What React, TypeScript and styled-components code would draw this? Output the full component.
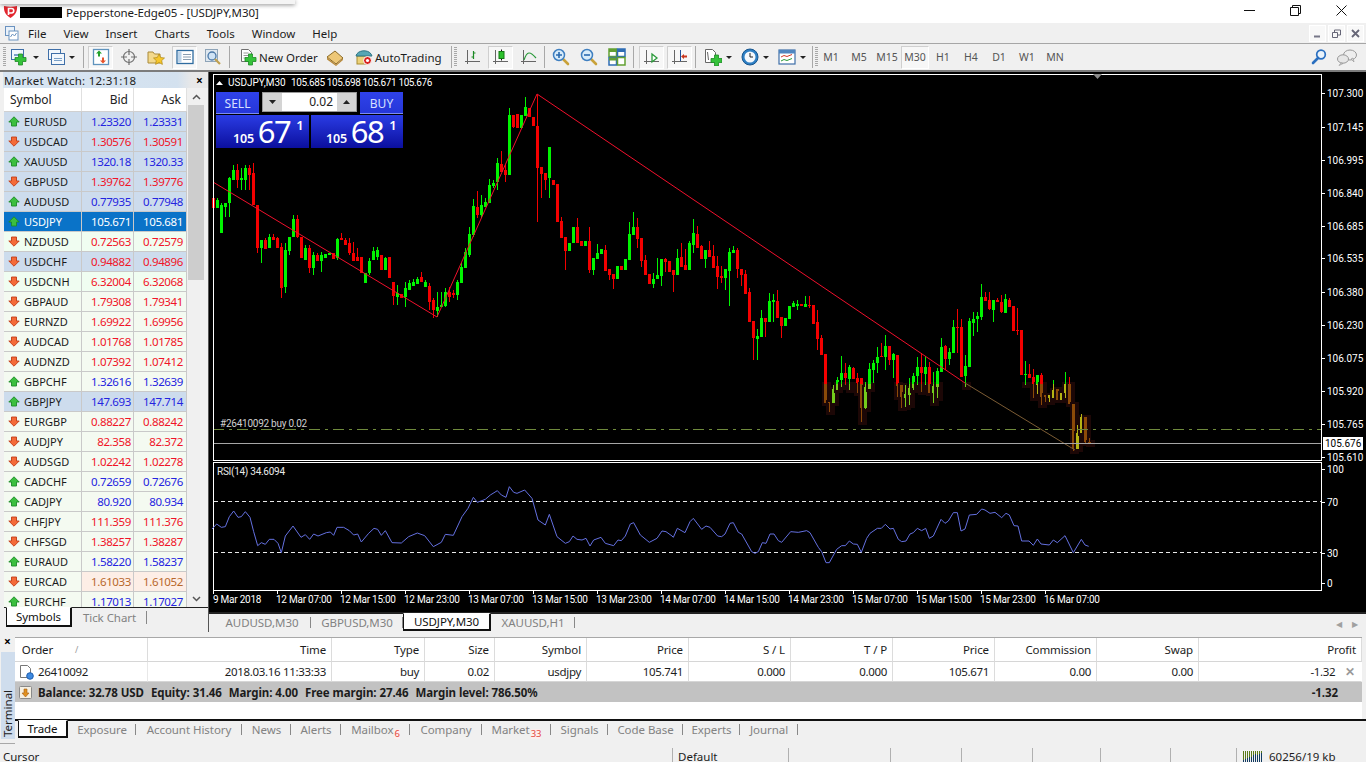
import React from 'react'
import styled, { createGlobalStyle } from 'styled-components'

const Global = createGlobalStyle`
  html, body { margin: 0; padding: 0; background: #f0f0f0; }
  body { font-family: 'Noto Sans', 'Liberation Sans', sans-serif; font-size: 11.5px; color: #1c1c1c; }
  * { box-sizing: border-box; }
`

const CHART_FONT = "'Roboto', 'Liberation Sans', sans-serif"

const Page = styled.div`
  position: relative;
  width: 1366px;
  height: 762px;
  overflow: hidden;
  display: flex;
  flex-direction: column;
`

const StrayPopup = styled.div`
  position: absolute;
  left: 0;
  top: 0;
  width: 295px;
  height: 4px;
  background: #f4f4f4;
  box-shadow: 0 1px 4px rgba(0, 0, 0, 0.45);
`

/* title bar */
const TitleBar = styled.div`
  height: 23px;
  flex: none;
  background: #fff;
  display: flex;
  align-items: center;
  padding-left: 3px;
`
const BlackedOut = styled.div`
  width: 42px;
  height: 11px;
  background: #000;
  margin: 1px 4px 0 2px;
`
const TitleText = styled.div`
  margin-top: 1px;
  letter-spacing: -0.1px;
`
const CaptionButtons = styled.div`
  margin-left: auto;
  margin-right: 2px;
  display: flex;
  margin-top: -3px;
`
const CaptionButton = styled.div`
  width: 46px;
  display: flex;
  justify-content: center;
`

/* menu */
const MenuBar = styled.div`
  height: 21px;
  flex: none;
  background: #f0f0f0;
  border-bottom: 1px solid #a6a6a6;
  display: flex;
  align-items: center;
  padding: 0 2px 0 5px;
  gap: 17px;
`
const MenuIcon = styled.div`
  margin-right: -8px;
`
const MdiButtons = styled.div`
  margin-left: auto;
  display: flex;
  gap: 2px;
`
const MdiButton = styled.div`
  width: 17px;
  height: 17px;
  background: #f8f8f8;
  border: 1px solid #fff;
  display: flex;
  align-items: center;
  justify-content: center;
`

/* toolbar */
const ToolBar = styled.div`
  height: 28px;
  flex: none;
  background: #f0f0f0;
  border-bottom: 2px solid #7c7c7c;
  display: flex;
  align-items: center;
  padding: 0 5px 0 3px;
`
const Grip = styled.div<{ $ml?: number }>`
  width: 3px;
  height: 20px;
  margin-left: ${p => p.$ml ?? 0}px;
  background: repeating-linear-gradient(#a8a8a8 0 1px, transparent 1px 2px);
`
const ToolSep = styled.div<{ $ml: number }>`
  width: 1px;
  height: 22px;
  background: #a8a8a8;
  margin-left: ${p => p.$ml}px;
`
const Tool = styled.div<{ $w?: number; $ml?: number; $active?: boolean; $push?: boolean }>`
  width: ${p => p.$w ?? 25}px;
  height: 23px;
  margin-left: ${p => (p.$push ? 'auto' : `${p.$ml ?? 0}px`)};
  flex: none;
  display: flex;
  align-items: center;
  justify-content: center;
  ${p => p.$active && 'background: #f7f7f7; border: 1px solid #cfcfcf; border-bottom-color: #fff; border-right-color: #fff;'}
`
const TextTool = styled(Tool)`
  justify-content: flex-start;
  padding-left: 5px;
  gap: 2px;
  white-space: nowrap;
`
const DropArrow = styled.div`
  width: 0;
  height: 0;
  border-left: 3px solid transparent;
  border-right: 3px solid transparent;
  border-top: 3px solid #222;
`
const Period = styled(Tool)`
  width: 28px;
  color: #555;
  font-size: 10.5px;
`

/* work area */
const Workspace = styled.div`
  height: 560px;
  flex: none;
  display: flex;
`
const MarketWatch = styled.div`
  width: 209px;
  flex: none;
  display: flex;
  flex-direction: column;
  background: #f0f0f0;
  border-right: 1px solid #555;
  padding-left: 4px;
`
const WatchTitle = styled.div`
  height: 16px;
  flex: none;
  display: flex;
  align-items: center;
  margin-left: -1px;
  letter-spacing: 0.25px;
  background: linear-gradient(90deg, #d8e5f2, #d3e1ef 85%, #e8e8e8 92%);
  padding-left: 1px;
  color: #222;
`
const WatchClose = styled.span`
  margin-left: auto;
  margin-right: 5px;
  font-weight: 700;
  font-size: 12px;
  color: #000;
`
const WatchBody = styled.div`
  height: 519px;
  flex: none;
  display: flex;
  overflow: hidden;
`
const WatchTable = styled.div`
  width: 183px;
  flex: none;
`
const WatchHead = styled.div`
  height: 24px;
  display: grid;
  grid-template-columns: 78px 52px 53px;
  background: #fff;
  border-bottom: 1px solid #d0d0d0;
  font-size: 12px;
  color: #222;
`
const HeadCell = styled.div<{ $left?: boolean }>`
  display: flex;
  align-items: center;
  justify-content: ${p => (p.$left ? 'flex-start' : 'flex-end')};
  padding: 0 5px 0 6px;
  border-right: 1px solid #e0e0e0;
`
const TONES = {
  blue: '#cddced',
  green: '#f0fdf1',
  pale: '#f4faf1',
  sel: '#0a73c8',
}
type Tone = keyof typeof TONES
const WatchRow = styled.div<{ $tone: Tone }>`
  height: 20px;
  display: grid;
  grid-template-columns: 78px 52px 53px;
  background: ${p => TONES[p.$tone]};
  color: ${p => (p.$tone === 'sel' ? '#fff' : '#1c1c1c')};
  font-size: 11.5px;
`
const SymbolCell = styled.div`
  display: flex;
  align-items: center;
  gap: 4px;
  padding-left: 4px;
  font-size: 11px;
  border-right: 1px solid #c9c9c9;
  border-bottom: 1px solid #c9c9c9;
`
const PriceCell = styled.div<{ $color: string; $tint?: string; $pr: number }>`
  display: flex;
  align-items: center;
  justify-content: flex-end;
  padding-right: ${p => p.$pr}px;
  letter-spacing: -0.36px;
  color: ${p => p.$color};
  background: ${p => p.$tint ?? 'transparent'};
  border-right: 1px solid #c9c9c9;
  border-bottom: 1px solid #c9c9c9;
`
const ScrollBar = styled.div`
  width: 16px;
  flex: none;
  margin-left: 1px;
  display: flex;
  flex-direction: column;
  background: #f0f0f0;
`
const ScrollButton = styled.div`
  height: 17px;
  flex: none;
  display: flex;
  align-items: center;
  justify-content: center;
`
const ScrollThumb = styled.div`
  height: 175px;
  flex: none;
  background: #cdcdcd;
`
const ScrollRest = styled.div`
  flex: 1;
`
const SheetTabs = styled.div<{ $top: string }>`
  height: 21px;
  flex: none;
  display: flex;
  align-items: stretch;
  background: #f0f0f0;
  border-top: 1px solid ${p => p.$top};
  color: #828282;
  letter-spacing: -0.05px;
`
const SheetTab = styled.div<{ $w: number; $ml?: number; $active?: boolean; $sep?: boolean }>`
  width: ${p => p.$w}px;
  margin-left: ${p => p.$ml ?? 0}px;
  margin-top: -1px;
  flex: none;
  display: flex;
  align-items: center;
  justify-content: center;
  white-space: nowrap;
  position: relative;
  ${p => p.$active && `
    background: #fff;
    color: #111;
    border: 1px solid #111;
    border-top-color: #fff;
    border-bottom-width: 2px;
    border-right-width: 2px;
    margin-bottom: 1px;
  `}
  ${p => p.$sep && `
    &::after {
      content: '';
      position: absolute;
      right: 0;
      top: 4px;
      bottom: 4px;
      width: 1px;
      background: #888;
    }
  `}
`
const ChartColumn = styled.div`
  flex: 1;
  display: flex;
  flex-direction: column;
  min-width: 0;
`
const ChartBox = styled.div`
  position: relative;
  height: 540px;
  flex: none;
  background: #000;
`
const ChartSvg = styled.svg`
  display: block;
  font-family: ${CHART_FONT};
  font-size: 10px;
`
const ChartTabs = styled(SheetTabs)`
  height: 20px;
  border-top: 2px solid #222;
  padding-left: 4px;
`
const TabScroller = styled.div`
  margin-left: auto;
  width: 44px;
  display: flex;
  align-items: center;
  justify-content: space-between;
  padding: 0 8px 0 14px;
  color: #a0a0a0;
  font-size: 8px;
`

/* one click trading */
const OneClick = styled.div`
  position: absolute;
  left: 7px;
  top: 20px;
  width: 187px;
  display: grid;
  grid-template-columns: 93px 92px;
  column-gap: 2px;
  row-gap: 1px;
`
const TradeRow = styled.div`
  grid-column: 1 / -1;
  display: flex;
  justify-content: space-between;
  height: 22px;
`
const TradeButton = styled.div`
  width: 43px;
  background: linear-gradient(#2f42ea, #2536d8);
  color: #d8e0ff;
  font-size: 12px;
  display: flex;
  align-items: center;
  justify-content: center;
  box-shadow: inset 0 -1px 0 #7e8cf0;
`
const Spinner = styled.div`
  width: 95px;
  height: 20px;
  background: #d4d4d4;
  border: 1px solid #999;
  display: flex;
  align-items: stretch;
`
const SpinStep = styled.div`
  width: 19px;
  flex: none;
  display: flex;
  align-items: center;
  justify-content: center;
`
const SpinValue = styled.div`
  flex: 1;
  background: #fff;
  text-align: right;
  font-size: 12px;
  line-height: 18px;
  padding-right: 4px;
  color: #222;
`
const PriceBox = styled.div<{ $pad: number }>`
  height: 33px;
  background: linear-gradient(#2a3ce4, #0b0f9e);
  color: #fff;
  display: flex;
  align-items: baseline;
  padding-left: ${p => p.$pad}px;
`
const PriceHandle = styled.span`
  font-size: 12.5px;
  font-weight: 600;
  letter-spacing: -0.2px;
`
const PriceBig = styled.span`
  font-size: 31px;
  line-height: 32px;
  margin-left: 4px;
  letter-spacing: -1.6px;
`
const PriceSup = styled.span`
  font-size: 13px;
  font-weight: 600;
  margin-left: 6px;
  align-self: flex-start;
  margin-top: 1px;
`

/* terminal */
const Terminal = styled.div`
  height: 112px;
  flex: none;
  display: flex;
  background: #f0f0f0;
  border-bottom: 1px solid #a8a8a8;
`
const TerminalSide = styled.div`
  width: 15px;
  flex: none;
  display: flex;
  flex-direction: column;
  align-items: center;
`
const TerminalClose = styled.div`
  height: 20px;
  padding-top: 2px;
  font-weight: 700;
  font-size: 12px;
  color: #000;
  line-height: 16px;
`
const TerminalLabel = styled.div`
  flex: 1;
  width: 14px;
  margin-bottom: 4px;
  background: #cfdded;
  writing-mode: vertical-rl;
  transform: rotate(180deg);
  line-height: 14px;
  color: #222;
  padding-top: 2px;
`
const TerminalMain = styled.div`
  flex: 1;
  display: flex;
  flex-direction: column;
  padding-top: 5px;
  min-width: 0;
`
const TradeTable = styled.div`
  width: 1347px;
  height: 82px;
  flex: none;
  background: #fff;
  border-top: 1px solid #a8a8a8;
`
const COLUMNS = '133px 184px 93px 70px 92px 102px 102px 102px 102px 102px 102px 163px'
const GridRow = styled.div<{ $h: number; $num?: boolean }>`
  height: ${p => p.$h}px;
  display: grid;
  grid-template-columns: ${COLUMNS};
  letter-spacing: ${p => (p.$num ? '-0.32px' : '-0.12px')};
`
const GridCell = styled.div<{ $left?: boolean; $line?: string }>`
  display: flex;
  align-items: center;
  justify-content: ${p => (p.$left ? 'flex-start' : 'flex-end')};
  gap: 4px;
  padding: 0 5px 0 4px;
  white-space: nowrap;
  border-right: 1px solid ${p => p.$line ?? '#dcdcdc'};
  border-bottom: 1px solid #d6d6d6;
`
const SortMark = styled.span`
  color: #999;
  font-size: 9px;
  margin-left: 18px;
`
const CloseMark = styled.span`
  color: #999;
  font-weight: 700;
  margin-left: 6px;
  margin-right: 1px;
`
const BalanceRow = styled.div`
  height: 20px;
  background: #c2c2c2;
  display: flex;
  align-items: center;
  padding-left: 4px;
  font-weight: 700;
  letter-spacing: -0.08px;
`
const BalanceItem = styled.span`
  margin-left: 7px;
  &:first-of-type { margin-left: 6px; }
`
const BalanceTotal = styled.span`
  margin-left: auto;
  margin-right: 24px;
`
const TerminalTabs = styled(SheetTabs)`
  height: 25px;
  border-top: 2px solid #111;
  padding: 0 0 5px 3px;
`
const Counter = styled.span`
  color: #e2483c;
  background: #fdeeee;
  font-size: 9.5px;
  line-height: 10px;
  margin: 8px 0 0 1px;
`

/* status bar */
const StatusBar = styled.div`
  flex: 1;
  display: flex;
  background: #f0f0f0;
  line-height: 17px;
  overflow: hidden;
  padding-top: 4px;
  padding-left: 3px;
`
const StatusCell = styled.div<{ $w: number; $flush?: boolean; $plain?: boolean }>`
  width: ${p => p.$w}px;
  flex: none;
  padding-left: ${p => (p.$flush ? 0 : 5)}px;
  border-right: ${p => (p.$plain ? 'none' : '1px solid #b0b0b0')};
  display: flex;
  gap: 5px;
  white-space: nowrap;
`

/* icons */
const IconSvg = styled.svg`
  flex: none;
  display: block;
`
const Svg: React.FC<{ s?: number; w?: number; h?: number; children: React.ReactNode }> = ({ s = 18, w, h, children }) => (
  <IconSvg width={w ?? s} height={h ?? s} viewBox={`0 0 ${w ?? s} ${h ?? s}`}>{children}</IconSvg>
)
const GreenPlus: React.FC<{ x: number; y: number }> = ({ x, y }) => (
  <path d={`M${x + 3.5} ${y}h4v3.5h3.5v4h-3.5v3.5h-4v-3.5h-3.5v-4h3.5z`} fill="#35c23a" stroke="#1c8a24" strokeWidth=".8" />
)
const Axes = () => <path d="M3.5 2v14M1 13.5h15" stroke="#666" fill="none" />
const Lens: React.FC<{ sign: 'plus' | 'minus' }> = ({ sign }) => (
  <Svg>
    <path d="M11 11l5 5" stroke="#c9a23a" strokeWidth="2.6" strokeLinecap="round" />
    <circle cx="7" cy="7" r="5.5" fill="#d8ecfa" stroke="#3f7fc0" strokeWidth="1.5" />
    <path d={sign === 'plus' ? 'M4 7h6M7 4v6' : 'M4 7h6'} stroke="#2a6ab0" strokeWidth="1.6" />
  </Svg>
)
const LogoIcon = () => (
  <Svg w={15} h={13}>
    <path d="M1 1c4 1 9 1 13 0 .5 5-1.5 9-6.5 12C2.500 10 .5 6 1 1z" fill="#e2262e" />
    <path d="M5.500 10V3.500h3a2 2 0 010 4.500h-3" fill="none" stroke="#fff" strokeWidth="1.600" />
  </Svg>
)
const FileMenuIcon = () => (
  <Svg w={14} h={15}>
    <rect x=".5" y=".5" width="9" height="9" fill="#eaf2fa" stroke="#6b93c0" />
    <rect x="4" y="5" width="9" height="9" fill="#fff" stroke="#6b93c0" />
    <path d="M5.500 11l2-3 2 2 2-3" stroke="#6b93c0" fill="none" />
  </Svg>
)
const Window: React.FC<{ x: number; y: number; w: number; h: number }> = ({ x, y, w, h }) => (
  <g>
    <rect x={x + .5} y={y + .5} width={w} height={h} fill="#f2f7fc" stroke="#3f6fa8" />
    <path d={`M${x + 3} ${y + 5.5}h${w - 5}M${x + 3} ${y + h - 3.5}h${w - 5}`} stroke="#7aa0c8" />
  </g>
)
const ICONS: Record<string, React.ReactNode> = {
  newChart: <Svg><Window x={1} y={1} w={12} h={10} /><GreenPlus x={5} y={6} /></Svg>,
  profiles: <Svg><Window x={1} y={1} w={12} h={10} /><Window x={4} y={5} w={13} h={11} /></Svg>,
  watch: (
    <Svg>
      <rect x="1.500" y="1.500" width="15" height="15" fill="#fff" stroke="#5f93bd" strokeWidth="1.300" />
      <path d="M7 2.500l3 3H8v3H6v-3H4z" fill="#22a02a" />
      <path d="M11 15.500l3-3h-2v-3h-2v3H8z" fill="#e8532a" />
    </Svg>
  ),
  cross: (
    <Svg>
      <circle cx="9" cy="9" r="5.500" fill="none" stroke="#707070" strokeWidth="1.200" />
      <path d="M9 1v6M9 11v6M1 9h6M11 9h6" stroke="#707070" strokeWidth="1.200" />
    </Svg>
  ),
  favorites: (
    <Svg>
      <path d="M1 4h5l1.500 2H13v9H1z" fill="#f3d98c" stroke="#a98a3a" />
      <path d="M12 6l1.700 3.500 3.800.5-2.800 2.600.7 3.800-3.400-1.900-3.400 1.900.7-3.800L6.500 10l3.800-.5z" fill="#f6c62a" stroke="#ad8716" strokeWidth=".7" />
    </Svg>
  ),
  navigator: (
    <Svg>
      <rect x="1" y="2.500" width="16" height="13" fill="#fff" stroke="#2f6ca0" strokeWidth="1.300" />
      <rect x="2" y="3.500" width="3.500" height="11" fill="#bcd4ea" />
      <path d="M7 6.500h8M7 9h8M7 11.500h8" stroke="#8a9db0" />
    </Svg>
  ),
  tester: (
    <Svg>
      <rect x="1.500" y="1.500" width="12" height="12" fill="#dfe8f0" stroke="#8ea4b8" />
      <circle cx="8" cy="8" r="4" fill="#cfe3f5" stroke="#4a78a8" strokeWidth="1.300" />
      <path d="M11 11l5 5" stroke="#c0a050" strokeWidth="2.200" />
    </Svg>
  ),
  newOrder: (
    <Svg>
      <path d="M2.500 1.500h7l3 3v9h-10z" fill="#fff" stroke="#707070" />
      <path d="M4.500 5h5M4.500 7.500h5M4.500 10h3" stroke="#999" />
      <GreenPlus x={6} y={6} />
    </Svg>
  ),
  book: (
    <Svg>
      <path d="M1 9l8-6 8 7-7 6z" fill="#edc777" stroke="#8a6a28" />
      <path d="M1 9.500v2l9 6.500 7-6v-1.500l-7 6z" fill="#b98a3a" />
    </Svg>
  ),
  auto: (
    <Svg>
      <rect x="2" y="8" width="11" height="8" fill="#ecd27a" stroke="#a88c30" />
      <path d="M1 8c1-6 12-7 15-2l1 2z" fill="#57a6b4" stroke="#2f7484" />
      <circle cx="12.500" cy="12.500" r="4" fill="#d8231f" stroke="#fff" />
      <circle cx="12.500" cy="12.500" r="1.600" fill="#fff" />
    </Svg>
  ),
  bars: <Svg><Axes /><path d="M9.500 3v8M7.500 9h2M9.500 5h2" stroke="#1c8a24" strokeWidth="1.200" fill="none" /></Svg>,
  candles: <Svg><Axes /><path d="M9.500 1.500v11" stroke="#111" /><rect x="7" y="3.500" width="5" height="7" fill="#2bc02b" stroke="#137a13" /></Svg>,
  line: <Svg><Axes /><path d="M4 12c3-9 6-9 12-2" stroke="#2a9a3a" strokeWidth="1.200" fill="none" /></Svg>,
  tile: (
    <Svg>
      <rect x="1" y="1" width="7.500" height="7.500" fill="#fff" stroke="#62a032" strokeWidth="1.500" />
      <rect x="9.500" y="1" width="7.500" height="7.500" fill="#fff" stroke="#2e6cb4" strokeWidth="1.500" />
      <rect x="1" y="9.500" width="7.500" height="7.500" fill="#fff" stroke="#2e6cb4" strokeWidth="1.500" />
      <rect x="9.500" y="9.500" width="7.500" height="7.500" fill="#fff" stroke="#62a032" strokeWidth="1.500" />
      <path d="M1 2.500h7.500M1 11h7.500" stroke="#62a032" strokeWidth="3" />
      <path d="M9.500 2.500H17" stroke="#2e6cb4" strokeWidth="3" />
    </Svg>
  ),
  scroll: <Svg><Axes /><path d="M9 6l5 4-5 4z" fill="#fff" stroke="#2a9a3a" strokeWidth="1.300" /></Svg>,
  shift: <Svg><Axes /><path d="M9.500 2v11" stroke="#1f4f9a" /><path d="M16 7.500h-3V6l-3 2.500 3 2.500V9.500h3z" fill="#c8361e" /></Svg>,
  newDoc: (
    <Svg>
      <path d="M1.500 1.500h7l3 3v10h-10z" fill="#fff" stroke="#666" />
      <path d="M3.500 4l1 8" stroke="#666" />
      <GreenPlus x={7} y={7} />
    </Svg>
  ),
  clock: (
    <Svg>
      <circle cx="9" cy="9" r="8" fill="#2d7fc4" stroke="#17558e" />
      <circle cx="9" cy="9" r="5.500" fill="#f4f8fc" />
      <path d="M9 5v4h3" stroke="#222" fill="none" />
    </Svg>
  ),
  template: (
    <Svg>
      <rect x="1" y="2" width="16" height="14" fill="#fff" stroke="#3f6fa8" strokeWidth="1.200" />
      <rect x="1" y="2" width="16" height="3.500" fill="#4f86c0" />
      <path d="M3 9l3-1.500 3 1 5-2" stroke="#d23a2a" fill="none" />
      <path d="M3 13l3-1.500 3 1 5-2" stroke="#2a9a3a" fill="none" />
    </Svg>
  ),
  search: (
    <Svg>
      <circle cx="11" cy="6.500" r="4.300" fill="#eaf3fb" stroke="#2a6fc0" strokeWidth="1.700" />
      <path d="M8 10l-5 5" stroke="#2a6fc0" strokeWidth="2.600" strokeLinecap="round" />
    </Svg>
  ),
  chat: (
    <Svg w={22} h={18}>
      <ellipse cx="14" cy="7" rx="6.500" ry="5" fill="#eee" stroke="#999" />
      <path d="M15 11l3 3-1-4z" fill="#ddd" stroke="#999" strokeWidth=".7" />
      <ellipse cx="7" cy="11" rx="5.500" ry="4.200" fill="#e6e6e6" stroke="#999" />
      <path d="M5 15l-2 2.500 4-2z" fill="#ddd" stroke="#999" strokeWidth=".7" />
    </Svg>
  ),
}

const UpArrow = () => (
  <Svg w={12} h={11}>
    <path d="M6 .8L11.200 6H8.500v4h-5V6H.8z" fill="#3bbf3f" stroke="#1c8a28" strokeWidth=".9" />
  </Svg>
)
const DownArrow = () => (
  <Svg w={12} h={11}>
    <path d="M6 10.200L.8 5h2.700V1h5v4h2.700z" fill="#f46a38" stroke="#c23c16" strokeWidth=".9" />
  </Svg>
)

/* quote data */
type Quote = [string, string, string, 'u' | 'd', Tone?, string?]
const QUOTES: Quote[] = [
  ['EURUSD', '1.23320', '1.23331', 'u', 'blue'],
  ['USDCAD', '1.30576', '1.30591', 'd', 'blue'],
  ['XAUUSD', '1320.18', '1320.33', 'u', 'blue'],
  ['GBPUSD', '1.39762', '1.39776', 'd', 'blue'],
  ['AUDUSD', '0.77935', '0.77948', 'u', 'blue'],
  ['USDJPY', '105.671', '105.681', 'u', 'sel'],
  ['NZDUSD', '0.72563', '0.72579', 'd', 'green'],
  ['USDCHF', '0.94882', '0.94896', 'd', 'blue'],
  ['USDCNH', '6.32004', '6.32068', 'd', 'green'],
  ['GBPAUD', '1.79308', '1.79341', 'd'],
  ['EURNZD', '1.69922', '1.69956', 'd'],
  ['AUDCAD', '1.01768', '1.01785', 'd'],
  ['AUDNZD', '1.07392', '1.07412', 'd'],
  ['GBPCHF', '1.32616', '1.32639', 'u'],
  ['GBPJPY', '147.693', '147.714', 'u', 'blue'],
  ['EURGBP', '0.88227', '0.88242', 'd'],
  ['AUDJPY', '82.358', '82.372', 'd'],
  ['AUDSGD', '1.02242', '1.02278', 'd'],
  ['CADCHF', '0.72659', '0.72676', 'u'],
  ['CADJPY', '80.920', '80.934', 'u'],
  ['CHFJPY', '111.359', '111.376', 'd'],
  ['CHFSGD', '1.38257', '1.38287', 'd'],
  ['EURAUD', '1.58220', '1.58237', 'u'],
  ['EURCAD', '1.61033', '1.61052', 'd', 'pale', '#fdeee6'],
  ['EURCHF', '1.17013', '1.17027', 'u'],
]

/* candles, read from 3x crops: kind top,bottom,high,low in crop pixels */
const CANDLES_A = `r370,400,365,405 g375,400,368 g390,475,385 g385,395,385,425 g310,385,305,425 g285,315,270 r285,315,268,340
g310,315,280,345 g280,315,270,345 r280,300,270,345 r295,390,265 r390,520,390,535 g495,520,495,565 r495,522,490 g487,520,478 r485,495,478
r490,520,485 r515,640,505,668 g525,635,505,655 g485,527,485,540 g433,487,420 r433,485,420,490 r485,550 g520,555,510 r520,580,510,595
g540,580,530,600 r540,558,535 g540,558,530,590 g538,548 g533,540 r535,553 g492,550,488,555 r490,495,475 r495,510,488 r505,535,490,540
r535,558,500 r545,558,520 r545,595 g595,625 g557,595,550,600 g527,555,515 g525,545,515,555 r540,585 g548,585,545 r547,610 r622,662,622,690
g655,665,630,690 r658,668 g640,665,620,695 g625,645,615 g622,632,612 g612,627,605 r605,622,592 g622,635,615 r632,680,625,705 r675,705,670,730
g695,708,650,725 g690,697,650 g650,692,640,695 r650,665,635,680 r655,660,645,670 g622,660,615,675 g575,625,565 g530,580,520 g478,540,455,545
g393,480,372,485 r395,420,347,430 g390,420,360,428 g380,395,370 g330,385,312 g325,332,315,340 g265,320,250,345 r267,290,228 r285,300,270,322
g120,300,100 r120,155,120,160 r118,160 g120,158 g97,122,65 r100,125 r125,152 r152,278,60,440 r275,297,275,370 r295,315,295,345 g215,310,215,370`
const CANDLES_B = `r0,15 r12,125 r123,173,110 r172,212,172,270 g190,212 g140,190 r140,188,113 r183,198 g183,198 r183,270,140,280 g233,270,233,285
g218,237,193 g207,222 r210,273,195 r268,285,268,300 r282,297,282,327 g258,298 r258,270 g237,270 g162,240,127 g140,165,97 r140,177,113,205
r175,242,175,260 r240,285,225 r283,312 g297,312,280,325 g285,297,235 g238,288,238,318 r238,245,235,275 r243,275 r270,285,270,335 g233,285,207
r232,260,190 r255,270,208 g190,270,183 g158,195,117,218 r162,203,138 r197,237,195 g210,237,210,265 r210,232,183 r228,263,195 r258,290,228,327
r288,293,257,308 g267,293,267,330 g215,272,205,378 g210,218,198 r210,268,203,295 r267,285,267,318 r282,342,270 r335,425,325 r423,473,423,540
g467,477,447,540 g413,472,390 r413,427,413,470 g363,425,340 g360,365,342,425 r363,413,330 r411,437,411,475 g413,438 g378,417 g368,382,362
g372,377,360,390 r372,378 g372,382,348 r375,377,348,385 r375,432 r426,477,390,510 r473,525,465 r522,668 r665,670,665,695 g628,670,615 g600,630,590`
const CANDLES_C = `g308,330,258,350 r308,325,280,345 g292,327,285,360 r295,327,290 r323,340,310,370 r325,413,325,455 g352,413,335,418 g297,357,280
g280,300,270,340 g262,280,232,310 r258,262,220 g227,260,195,300 r228,270,228,285 g253,270,250,325 r255,347,255,382 r345,382,345,415
g373,383,345,410 g353,375,325,405 g318,355,310,360 g290,318,260,345 r290,310,250,365 g290,313,258,345 r290,370,275 g347,370,305,398
g303,350,295,385 g230,307,205 r228,268,225,300 g247,267,235,285 g170,250,150 r170,172,118,250 r170,320,147 g288,318,255,350 g153,292,145
g147,158,125,198 g137,148,125,185 g80,142,42,150 r80,93,65 r90,118,67,120 g90,120,90,155 r90,97,85 r95,125,75,128 g88,128,72 r90,110,85
r107,183 r180,183,115,195 r180,315 g312,316,272,345 r312,323,282 r321,343,296,385 g315,345,315,372 r315,380,310,405 r375,380,375,395
g375,383,375,395 g360,385,330 r358,390 g368,390 g343,370,305,385 r343,402,322 r402,537,402,542 g490,537,465 g442,490,432 r442,515,442,520 r515,522,503`

type Candle = { x: number; top: number; bottom: number; high: number; low: number; up: boolean }
const readCandles = (src: string, start: number, y0: number): Candle[] =>
  src.trim().split(/\s+/).map((tok, i) => {
    const [t, b, h, l] = tok.slice(1).split(',').map(Number)
    const y = (v: number) => y0 + v / 3
    return { x: 213 + (start + i) * 4, top: y(t), bottom: y(b), high: y(h ?? t), low: y(l ?? b), up: tok[0] === 'g' }
  })
const CANDLES = [
  ...readCandles(CANDLES_A, 0, 75),
  ...readCandles(CANDLES_B, 85, 180),
  ...readCandles(CANDLES_C, 157, 270),
]

/* from about y=384 on the right, the bars sit under a translucent panel */
const FADE_Y = 384
const FADE_X = 822
const fadeColor = (c: Candle) => (c.up ? (c.x > 1030 ? '#b4b414' : '#74cc1c') : '#8c4a08')
const CandleShape: React.FC<{ c: Candle }> = ({ c }) => {
  const color = c.up ? '#00f400' : '#f40000'
  const faded = c.x >= FADE_X && c.low > FADE_Y
  const split = (y1: number, y2: number, x: number, w: number) => {
    if (!faded || y2 <= FADE_Y) return <rect x={x} y={y1} width={w} height={Math.max(y2 - y1, 1)} fill={color} />
    if (y1 >= FADE_Y) return <rect x={x} y={y1} width={w} height={Math.max(y2 - y1, 1)} fill={fadeColor(c)} />
    return (
      <>
        <rect x={x} y={y1} width={w} height={FADE_Y - y1} fill={color} />
        <rect x={x} y={FADE_Y} width={w} height={y2 - FADE_Y} fill={fadeColor(c)} />
      </>
    )
  }
  return (
    <g>
      {faded && <rect x={c.x - 3} y={Math.max(FADE_Y, c.top) - 2} width={9} height={c.low - Math.max(FADE_Y, c.top) + 5} fill="#1c0706" />}
      {split(c.high, c.low, c.x, 1)}
      {split(c.top, c.bottom, c.x - 1, 3)}
    </g>
  )
}

/* RSI polyline, same 3x crops */
const RSI_A: [number, number][] = [[0,207],[14,192],[28,202],[40,200],[52,170],[65,153],[78,172],[88,170],[100,155],[114,172],[125,215],[137,257],[148,248],[160,253],[172,238],[186,238],[198,250],[208,278],[220,228],[243,198],[267,232],[280,224],[293,238],[305,222],[318,228],[343,218],[355,216],[365,226],[375,202],[395,202],[412,212],[425,225],[437,222],[448,246],[470,220],[486,205],[497,208],[508,226],[520,212],[540,248],[568,249],[590,230],[616,219],[638,227],[664,260],[688,247],[700,223],[724,226],[750,170],[768,145],[784,112],[796,127],[820,118],[835,105],[856,92],[868,105],[882,112],[892,80],[905,97],[915,100],[938,90],[960,115],[978,180],[1000,195],[1012,163],[1035,230],[1060,250],[1072,245],[1083,228],[1095,238],[1110,240],[1122,235],[1134,258],[1145,240],[1167,232],[1180,250],[1205,257],[1218,240],[1228,242],[1240,228],[1255,192],[1265,188],[1285,225],[1312,247],[1335,235],[1350,213],[1362,215],[1380,228]]
const RSI_B: [number, number][] = [[10,232],[22,205],[45,218],[60,185],[70,175],[95,208],[108,198],[120,202],[143,228],[155,230],[165,222],[180,190],[190,188],[205,217],[215,222],[245,275],[255,280],[265,275],[277,248],[288,250],[300,222],[312,222],[325,242],[335,247],[362,215],[385,217],[410,212],[420,218],[445,262],[455,275],[468,308],[478,308],[500,268],[515,257],[526,257],[538,243],[550,252],[562,253],[574,277],[590,235],[600,220],[622,205],[634,205],[646,193],[660,207],[670,205],[685,238],[695,245],[708,243],[720,222],[730,218],[742,205],[755,212],[767,205],[778,235],[790,228],[813,178],[825,190],[835,183],[850,158],[862,158],[873,213],[885,207],[898,165],[920,163],[935,147],[945,150],[960,160],[975,157],[995,173],[1008,160],[1018,165],[1032,197],[1044,198],[1055,243],[1077,243],[1090,256],[1102,237],[1113,252],[1138,255],[1150,240],[1162,248],[1185,227],[1210,278],[1234,238],[1245,255],[1256,259]]
const RSI_POINTS = [
  ...RSI_A.map(([x, y]) => `${212 + x / 3},${460 + y / 3}`),
  ...RSI_B.map(([x, y]) => `${670 + x / 3},${460 + y / 3}`),
].join(' ')

const PRICE_AXIS: [string, number][] = [
  ['107.300', 93], ['107.145', 127], ['106.995', 160], ['106.840', 193], ['106.685', 226], ['106.535', 258],
  ['106.380', 292], ['106.230', 325], ['106.075', 358], ['105.920', 391], ['105.765', 424], ['105.610', 457],
]
const RSI_AXIS: [string, number][] = [['100', 469], ['70', 502], ['30', 553], ['0', 583]]
const TIME_AXIS = ['9 Mar 2018', '12 Mar 07:00', '12 Mar 15:00', '12 Mar 23:00', '13 Mar 07:00', '13 Mar 15:00', '13 Mar 23:00',
  '14 Mar 07:00', '14 Mar 15:00', '14 Mar 23:00', '15 Mar 07:00', '15 Mar 15:00', '15 Mar 23:00', '16 Mar 07:00']

const ChartDrawing = () => (
  <ChartSvg width="1157" height="540" viewBox="209 72 1157 540">
    <g shapeRendering="crispEdges">
      {CANDLES.map((c, i) => <CandleShape key={i} c={c} />)}
    </g>
    <polyline points="213,182 437,317 537,94 965,383" fill="none" stroke="#f0102c" />
    <line x1="965" y1="383" x2="1075" y2="450" stroke="#7c5c34" />
    <g shapeRendering="crispEdges">
      <line x1="213" x2="1322" y1="429.500" y2="429.500" stroke="#6f8a3c" strokeDasharray="11 5 3 5" />
      <line x1="213" x2="1322" y1="443.500" y2="443.500" stroke="#a6a6a6" />
      <rect x="213.500" y="74.500" width="1108" height="386" fill="none" stroke="#fff" />
      <rect x="213.500" y="462.500" width="1108" height="128" fill="none" stroke="#fff" />
      <line x1="214" x2="1321" y1="501.500" y2="501.500" stroke="#e8e8e8" strokeDasharray="4 3" />
      <line x1="214" x2="1321" y1="552.500" y2="552.500" stroke="#e8e8e8" strokeDasharray="4 3" />
      {PRICE_AXIS.map(([, y]) => <line key={y} x1="1322" x2="1325" y1={y + .5} y2={y + .5} stroke="#fff" />)}
      {RSI_AXIS.map(([, y]) => <line key={y} x1="1322" x2="1325" y1={y + .5} y2={y + .5} stroke="#fff" />)}
      {TIME_AXIS.map((_, i) => <line key={i} x1={213.500 + i * 64} x2={213.500 + i * 64} y1="591" y2="594" stroke="#fff" />)}
    </g>
    <polyline points={RSI_POINTS} fill="none" stroke="#6470e0" strokeLinejoin="round" />
    <path d="M216 85l3.500-4 3.500 4z" fill="#fff" />
    <path d="M1093 74h9l-4.500 5z" fill="#8a8a8a" />
    <text x="228" y="86" fill="#fff">USDJPY,M30</text>
    <text x="291" y="86" fill="#fff" letterSpacing="-.38">105.685 105.698 105.671 105.676</text>
    <text x="220" y="427" fill="#cfcfcf" letterSpacing="-.25">#26410092 buy 0.02</text>
    <text x="217" y="475" fill="#e8e8e8" letterSpacing="-.27">RSI(14) 34.6094</text>
    <g fill="#fff">
      {PRICE_AXIS.map(([p, y]) => <text key={p} x="1327" y={y + 4}>{p}</text>)}
      {RSI_AXIS.map(([p, y]) => <text key={p} x="1327" y={y + 4}>{p}</text>)}
      {TIME_AXIS.map((t, i) => <text key={t} x={i === 0 ? 213 : 212 + i * 64} y="603" letterSpacing="-.25">{t}</text>)}
    </g>
    <rect x="1323" y="437" width="40" height="13" fill="#fff" />
    <text x="1325" y="447" fill="#000">105.676</text>
  </ChartSvg>
)

const TriSvg = styled.svg`
  display: block;
`
const Tri: React.FC<{ up?: boolean }> = ({ up }) => (
  <TriSvg width="7" height="4" viewBox="0 0 7 4">
    <path d={up ? 'M3.500 0L7 4H0z' : 'M0 0h7L3.500 4z'} fill="#222" />
  </TriSvg>
)

const CHART_TABS: { label: string; w: number; ml?: number; active?: boolean; sep?: boolean }[] = [
  { label: 'AUDUSD,M30', w: 98, sep: true },
  { label: 'GBPUSD,M30', w: 92, sep: true },
  { label: 'USDJPY,M30', w: 88, active: true, ml: 0 },
  { label: 'XAUUSD,H1', w: 84, sep: true },
]

const TERMINAL_TABS: { label: string; w: number; n?: string }[] = [
  { label: 'Exposure', w: 68 },
  { label: 'Account History', w: 106 },
  { label: 'News', w: 49 },
  { label: 'Alerts', w: 50 },
  { label: 'Mailbox', w: 69, n: '6' },
  { label: 'Company', w: 72 },
  { label: 'Market', w: 69, n: '33' },
  { label: 'Signals', w: 57 },
  { label: 'Code Base', w: 75 },
  { label: 'Experts', w: 57 },
  { label: 'Journal', w: 58 },
]

const App: React.FC = () => {
  return <Page>
    <Global />
    <TitleBar>
      <LogoIcon />
      <BlackedOut />
      <TitleText>Pepperstone-Edge05 - [USDJPY,M30]</TitleText>
      <CaptionButtons>
        <CaptionButton><Svg w={11} h={11}><path d="M0 5.500h11" stroke="#111" /></Svg></CaptionButton>
        <CaptionButton><Svg w={11} h={11}><path d="M.5 2.500h8v8h-8zM2.500 2.500v-2h8v8h-2" fill="none" stroke="#111" /></Svg></CaptionButton>
        <CaptionButton><Svg w={11} h={11}><path d="M.5.5l10 10M10.500.5l-10 10" stroke="#111" /></Svg></CaptionButton>
      </CaptionButtons>
    </TitleBar>

    <MenuBar>
      <MenuIcon><FileMenuIcon /></MenuIcon>
      <span>File</span>
      <span>View</span>
      <span>Insert</span>
      <span>Charts</span>
      <span>Tools</span>
      <span>Window</span>
      <span>Help</span>
      <MdiButtons>
        <MdiButton><Svg w={9} h={9}><path d="M1 7.500h6" stroke="#778" strokeWidth="2" /></Svg></MdiButton>
        <MdiButton><Svg w={9} h={9}><path d="M.5 3.500h5v5h-5zM2.500 3V1h6v5H6" fill="none" stroke="#667" /></Svg></MdiButton>
        <MdiButton><Svg w={9} h={9}><path d="M1 1l7 7M8 1L1 8" stroke="#667" strokeWidth="1.800" /></Svg></MdiButton>
      </MdiButtons>
    </MenuBar>

    <ToolBar>
      <Grip />
      <Tool $w={26}>{ICONS.newChart}</Tool>
      <Tool $w={8}><DropArrow /></Tool>
      <Tool $w={22} $ml={5}>{ICONS.profiles}</Tool>
      <Tool $w={10}><DropArrow /></Tool>
      <ToolSep $ml={6} />
      <Tool $ml={4} $active>{ICONS.watch}</Tool>
      <Tool $ml={3}>{ICONS.cross}</Tool>
      <Tool $ml={2}>{ICONS.favorites}</Tool>
      <Tool $ml={4} $active>{ICONS.navigator}</Tool>
      <Tool $ml={3}>{ICONS.tester}</Tool>
      <ToolSep $ml={4} />
      <TextTool $w={84} $ml={4}>{ICONS.newOrder}New Order</TextTool>
      <Tool $ml={4}>{ICONS.book}</Tool>
      <TextTool $w={95} $ml={3}>{ICONS.auto}AutoTrading</TextTool>
      <ToolSep $ml={6} />
      <Grip $ml={2} />
      <Tool $ml={3}>{ICONS.bars}</Tool>
      <Tool $ml={3} $active>{ICONS.candles}</Tool>
      <Tool $ml={3}>{ICONS.line}</Tool>
      <ToolSep $ml={3} />
      <Tool $ml={3}><Lens sign="plus" /></Tool>
      <Tool $ml={3}><Lens sign="minus" /></Tool>
      <Tool $ml={3}>{ICONS.tile}</Tool>
      <ToolSep $ml={4} />
      <Tool $ml={5} $active>{ICONS.scroll}</Tool>
      <Tool $ml={3} $active>{ICONS.shift}</Tool>
      <ToolSep $ml={3} />
      <Tool $w={24} $ml={5}>{ICONS.newDoc}</Tool>
      <Tool $w={8}><DropArrow /></Tool>
      <Tool $w={24} $ml={5}>{ICONS.clock}</Tool>
      <Tool $w={8}><DropArrow /></Tool>
      <Tool $w={24} $ml={5}>{ICONS.template}</Tool>
      <Tool $w={8}><DropArrow /></Tool>
      <ToolSep $ml={5} />
      <Grip $ml={2} />
      <Period $ml={-1}>M1</Period>
      <Period>M5</Period>
      <Period>M15</Period>
      <Period $active>M30</Period>
      <Period>H1</Period>
      <Period>H4</Period>
      <Period>D1</Period>
      <Period>W1</Period>
      <Period>MN</Period>
      <Tool $w={28} $push>{ICONS.search}</Tool>
      <Tool $w={28}>{ICONS.chat}</Tool>
    </ToolBar>

    <Workspace>
      <MarketWatch>
        <WatchTitle>
          Market Watch: 12:31:18
          <WatchClose>×</WatchClose>
        </WatchTitle>
        <WatchBody>
          <WatchTable>
            <WatchHead>
              <HeadCell $left>Symbol</HeadCell>
              <HeadCell>Bid</HeadCell>
              <HeadCell>Ask</HeadCell>
            </WatchHead>
            {QUOTES.map(([symbol, bid, ask, dir, tone = 'pale', tint]) => {
              const color = tone === 'sel' ? '#fff' : tint ? '#b8682c' : dir === 'u' ? '#2424e0' : '#f01428'
              return (
                <WatchRow key={symbol} $tone={tone}>
                  <SymbolCell>{dir === 'u' ? <UpArrow /> : <DownArrow />}{symbol}</SymbolCell>
                  <PriceCell $color={color} $tint={tint} $pr={2}>{bid}</PriceCell>
                  <PriceCell $color={color} $tint={tint} $pr={3}>{ask}</PriceCell>
                </WatchRow>
              )
            })}
          </WatchTable>
          <ScrollBar>
            <ScrollButton><Svg w={9} h={6}><path d="M1 5l3.500-3.500L8 5" fill="none" stroke="#555" strokeWidth="1.500" /></Svg></ScrollButton>
            <ScrollThumb />
            <ScrollRest />
            <ScrollButton><Svg w={9} h={6}><path d="M1 1l3.500 3.500L8 1" fill="none" stroke="#555" strokeWidth="1.500" /></Svg></ScrollButton>
          </ScrollBar>
        </WatchBody>
        <SheetTabs $top="#222">
          <SheetTab $w={66} $ml={2} $active>Symbols</SheetTab>
          <SheetTab $w={75} $sep>Tick Chart</SheetTab>
        </SheetTabs>
      </MarketWatch>

      <ChartColumn>
        <ChartBox>
          <ChartDrawing />
          <OneClick>
            <TradeRow>
              <TradeButton>SELL</TradeButton>
              <Spinner>
                <SpinStep><Tri /></SpinStep>
                <SpinValue>0.02</SpinValue>
                <SpinStep><Tri up /></SpinStep>
              </Spinner>
              <TradeButton>BUY</TradeButton>
            </TradeRow>
            <PriceBox $pad={17}><PriceHandle>105</PriceHandle><PriceBig>67</PriceBig><PriceSup>1</PriceSup></PriceBox>
            <PriceBox $pad={15}><PriceHandle>105</PriceHandle><PriceBig>68</PriceBig><PriceSup>1</PriceSup></PriceBox>
          </OneClick>
        </ChartBox>
        <ChartTabs $top="#222">
          {CHART_TABS.map(t => (
            <SheetTab key={t.label} $w={t.w} $ml={t.ml} $active={t.active} $sep={t.sep}>{t.label}</SheetTab>
          ))}
          <TabScroller><span>◀</span><span>▶</span></TabScroller>
        </ChartTabs>
      </ChartColumn>
    </Workspace>

    <Terminal>
      <TerminalSide>
        <TerminalClose>×</TerminalClose>
        <TerminalLabel>Terminal</TerminalLabel>
      </TerminalSide>
      <TerminalMain>
        <TradeTable>
          <GridRow $h={24}>
            <GridCell $left>&nbsp;Order<SortMark>/</SortMark></GridCell>
            {['Time', 'Type', 'Size', 'Symbol', 'Price', 'S / L', 'T / P', 'Price', 'Commission', 'Swap', 'Profit'].map((h, i) => (
              <GridCell key={i}>{h}</GridCell>
            ))}
          </GridRow>
          <GridRow $h={20} $num>
            <GridCell $left $line="#e8e8e8">
              <Svg w={15} h={16}>
                <path d="M1.500 1.500h7l3 3v9h-10z" fill="#fff" stroke="#777" />
                <circle cx="11" cy="12" r="3.300" fill="#3f8ae0" stroke="#2060b0" />
              </Svg>
              26410092
            </GridCell>
            <GridCell>2018.03.16 11:33:33</GridCell>
            <GridCell>buy</GridCell>
            <GridCell>0.02</GridCell>
            <GridCell>usdjpy</GridCell>
            <GridCell>105.741</GridCell>
            <GridCell>0.000</GridCell>
            <GridCell>0.000</GridCell>
            <GridCell>105.671</GridCell>
            <GridCell>0.00</GridCell>
            <GridCell>0.00</GridCell>
            <GridCell $line="#fff">-1.32<CloseMark>✕</CloseMark></GridCell>
          </GridRow>
          <BalanceRow>
            <Svg w={13} h={13}>
              <rect x=".5" y=".5" width="12" height="12" rx="1" fill="#f6f0e2" stroke="#8a8a8a" />
              <path d="M6.500 11L3 7h2V3h3v4h2z" fill="#e0901e" stroke="#a45a10" strokeWidth=".6" />
            </Svg>
            <BalanceItem>Balance: 32.78 USD</BalanceItem>
            <BalanceItem>Equity: 31.46</BalanceItem>
            <BalanceItem>Margin: 4.00</BalanceItem>
            <BalanceItem>Free margin: 27.46</BalanceItem>
            <BalanceItem>Margin level: 786.50%</BalanceItem>
            <BalanceTotal>-1.32</BalanceTotal>
          </BalanceRow>
        </TradeTable>
        <TerminalTabs $top="#111">
          <SheetTab $w={50} $active>Trade</SheetTab>
          {TERMINAL_TABS.map(t => (
            <SheetTab key={t.label} $w={t.w} $sep>{t.label}{t.n && <Counter>{t.n}</Counter>}</SheetTab>
          ))}
        </TerminalTabs>
      </TerminalMain>
    </Terminal>

    <StatusBar>
      <StatusCell $w={670} $flush>Cursor</StatusCell>
      <StatusCell $w={116}>Default</StatusCell>
      <StatusCell $w={102} />
      <StatusCell $w={71} />
      <StatusCell $w={71} />
      <StatusCell $w={68} />
      <StatusCell $w={70} />
      <StatusCell $w={66} />
      <StatusCell $w={126} $plain>
        <Svg w={22} h={15}>
          <g shapeRendering="crispEdges">
            <path d="M1.500 15V3M3.500 15V3M5.500 15V3M7.500 15V3M9.500 15V3M11.500 15V3M13.500 15V3M15.500 15V3M17.500 15V3M19.500 15V3" stroke="#5b7a18" />
            <path d="M1.500 15v-3M3.500 15v-4M5.500 15v-5M7.500 15v-6M9.500 15v-6M11.500 15V7M13.500 15V6M15.500 15V7M17.500 15V6M19.500 15V5" stroke="#123a60" />
          </g>
        </Svg>
        60256/19 kb
      </StatusCell>
    </StatusBar>
    <StrayPopup />
  </Page>
}

export default App
